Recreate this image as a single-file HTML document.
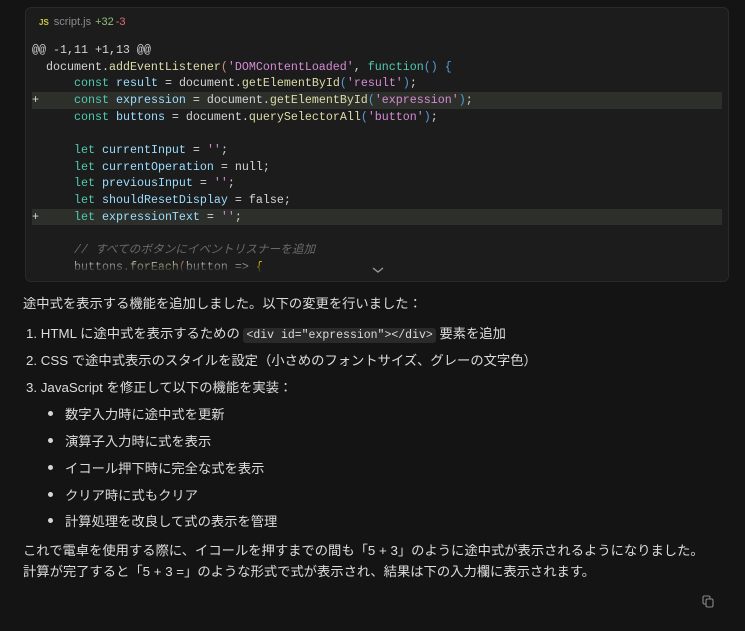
<!DOCTYPE html>
<html><head><meta charset="utf-8"><style>
*{margin:0;padding:0;box-sizing:border-box}
body{width:745px;height:631px;background:#141414;overflow:hidden;position:relative;font-family:"Liberation Sans","Noto Sans CJK JP",sans-serif;color:#d6d6d6}
.card{position:absolute;left:25px;top:7px;width:704px;height:275px;background:#1c1c1c;border:1px solid #2a2a2a;border-radius:6px;overflow:hidden}
.hdr{position:absolute;left:13px;top:8px;font-size:11px;color:#8b8b8b}
.hdr .js{color:#cbcb41;font-weight:bold;font-size:8px;margin-right:5px}
.hdr .p{color:#8fbf7a;margin-left:4px}.hdr .m{color:#e06c75;margin-left:2px}
.code{position:absolute;left:6px;top:34px;right:6px;font-family:"Liberation Mono","Noto Sans CJK JP",monospace;font-size:11.67px;line-height:16.67px;color:#d4d4d4}
.code div{height:16.67px;white-space:pre}
.add{background:#2d302a}
.k{color:#4ec9b0}.v{color:#9cdcfe}.f{color:#dcdcaa}.s{color:#ce9178}.s2{color:#d58bd5}.b{color:#569cd6}.c{color:#6a6a6a;font-style:italic}.y{color:#ffd700}
.fade{position:absolute;left:0;right:0;top:252px;height:23px;background:linear-gradient(rgba(28,28,28,0),#1c1c1c 55%)}
.chev{position:absolute;left:345px;top:257px}
.t{position:absolute;font-size:13.3px;white-space:nowrap;color:#dcdcdc}
code{font-family:"Liberation Mono",monospace;font-size:11.5px;background:#2a2a2a;border-radius:3px;padding:1px 3px}
.dot{position:absolute;width:5px;height:5px;border-radius:50%;background:#d6d6d6}
</style></head><body>
<div class="card">
<div class="hdr"><span class="js">JS</span>script.js<span class="p">+32</span><span class="m">-3</span></div>
<div class="code"><div>@@ -1,11 +1,13 @@</div><div>  document.<span class="f">addEventListener</span><span class="s">(</span><span class="s2">'DOMContentLoaded'</span>, <span class="k">function</span><span class="b">() {</span></div><div>      <span class="k">const</span> <span class="v">result</span> = document.<span class="f">getElementById</span><span class="b">(</span><span class="s2">'result'</span><span class="b">)</span>;</div><div class="add">+     <span class="k">const</span> <span class="v">expression</span> = document.<span class="f">getElementById</span><span class="b">(</span><span class="s2">'expression'</span><span class="b">)</span>;</div><div>      <span class="k">const</span> <span class="v">buttons</span> = document.<span class="f">querySelectorAll</span><span class="b">(</span><span class="s2">'button'</span><span class="b">)</span>;</div><div> </div><div>      <span class="k">let</span> <span class="v">currentInput</span> = <span class="s2">''</span>;</div><div>      <span class="k">let</span> <span class="v">currentOperation</span> = null;</div><div>      <span class="k">let</span> <span class="v">previousInput</span> = <span class="s2">''</span>;</div><div>      <span class="k">let</span> <span class="v">shouldResetDisplay</span> = false;</div><div class="add">+     <span class="k">let</span> <span class="v">expressionText</span> = <span class="s2">''</span>;</div><div> </div><div>      <span class="c">// すべてのボタンにイベントリスナーを追加</span></div><div>      buttons.<span class="f">forEach</span><span class="s">(</span>button =&gt; <span class="y">{</span></div></div>
<div class="fade"></div>
<svg class="chev" width="14" height="10" viewBox="0 0 14 10"><path d="M2 3l5 4 5-4" stroke="#9a9a9a" stroke-width="1.3" fill="none"/></svg>
</div>
<div class="t" style="left:23px;top:293px">途中式を表示する機能を追加しました。以下の変更を行いました：</div>
<div class="t" style="left:26px;top:323px">1. HTML に途中式を表示するための <code>&lt;div id="expression"&gt;&lt;/div&gt;</code> 要素を追加</div>
<div class="t" style="left:26px;top:350px">2. CSS で途中式表示のスタイルを設定（小さめのフォントサイズ、グレーの文字色）</div>
<div class="t" style="left:26px;top:377px">3. JavaScript を修正して以下の機能を実装：</div>
<div class="dot" style="left:48px;top:411px"></div><div class="t" style="left:65px;top:404px">数字入力時に途中式を更新</div>
<div class="dot" style="left:48px;top:438px"></div><div class="t" style="left:65px;top:431px">演算子入力時に式を表示</div>
<div class="dot" style="left:48px;top:465px"></div><div class="t" style="left:65px;top:458px">イコール押下時に完全な式を表示</div>
<div class="dot" style="left:48px;top:492px"></div><div class="t" style="left:65px;top:485px">クリア時に式もクリア</div>
<div class="dot" style="left:48px;top:518px"></div><div class="t" style="left:65px;top:511px">計算処理を改良して式の表示を管理</div>
<div class="t" style="left:23px;top:540px">これで電卓を使用する際に、イコールを押すまでの間も「5 + 3」のように途中式が表示されるようになりました。</div>
<div class="t" style="left:23px;top:561px">計算が完了すると「5 + 3 =」のような形式で式が表示され、結果は下の入力欄に表示されます。</div>
<svg style="position:absolute;left:702px;top:595px" width="13" height="13" viewBox="0 0 13 13"><rect x="1" y="1" width="7" height="8" rx="1.5" fill="none" stroke="#888" stroke-width="1.1"/><rect x="4" y="4" width="7" height="8" rx="1.5" fill="#141414" stroke="#888" stroke-width="1.1"/></svg>
</body></html>
